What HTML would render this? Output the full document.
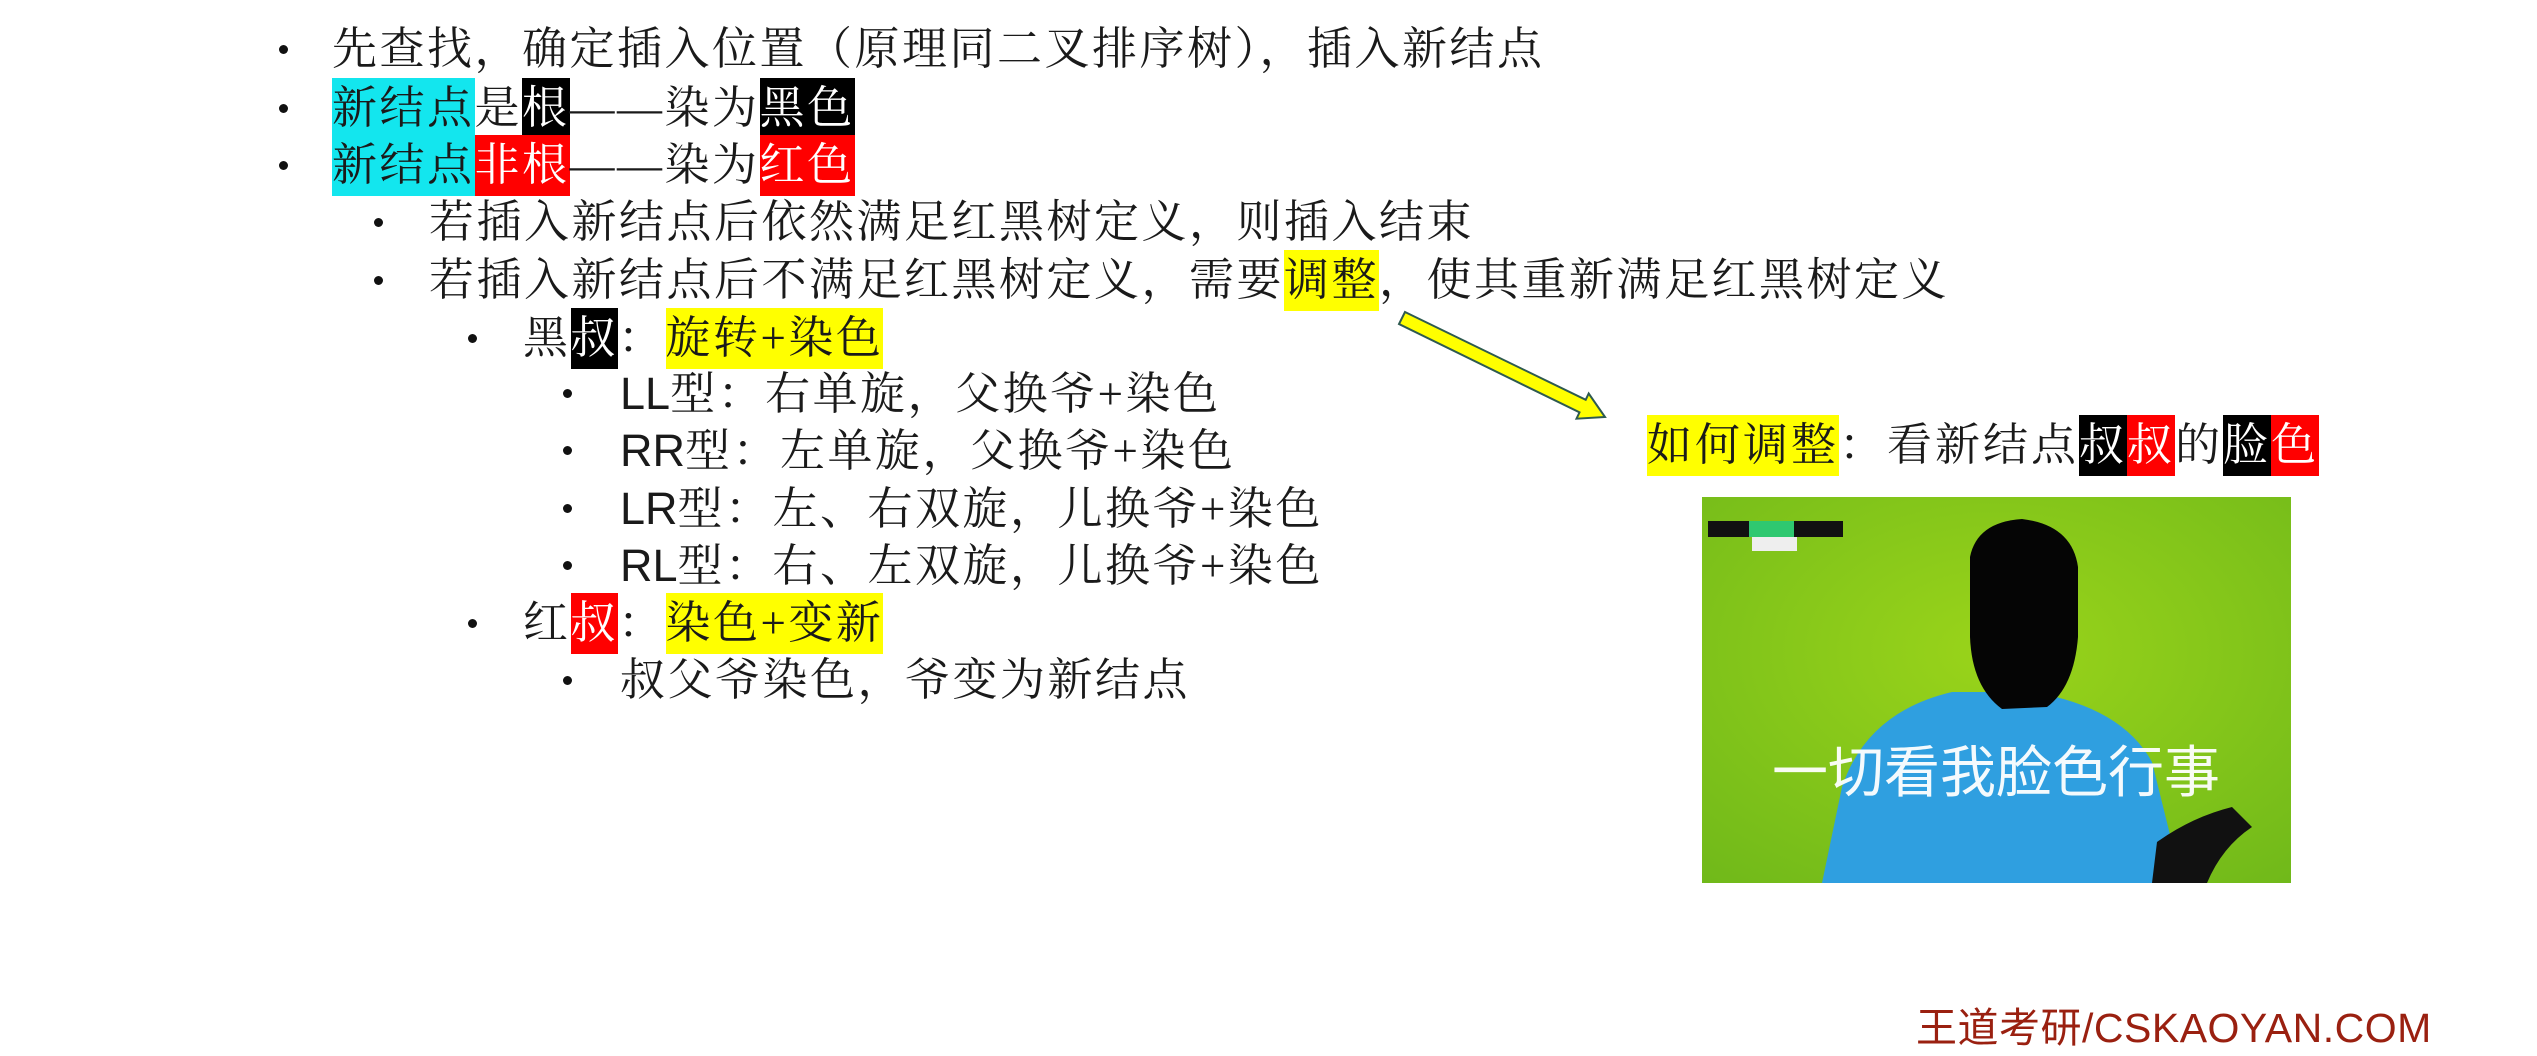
<!DOCTYPE html>
<html><head><meta charset="utf-8"><style>
html,body{margin:0;padding:0;background:#fff;}
body{width:2537px;height:1045px;position:relative;overflow:hidden;font-family:"Liberation Serif","Noto Serif CJK SC","Noto Sans CJK SC",serif;color:#1a1a1a;}
.l{position:absolute;height:57px;line-height:57px;font-size:45px;letter-spacing:2.5px;white-space:nowrap;}
.b{position:absolute;width:9px;height:9px;border-radius:50%;background:#111;}
.c,.k,.r,.y{padding:5px 0 6px;}
.c{background:#13e6ee;}
.k{background:#000;color:#fff;}
.r{background:#f00;color:#fff;}
.y{background:#ffff00;}
.s{font-family:"Liberation Sans",sans-serif;letter-spacing:0;}
</style></head><body>
<div class="b" style="left:279px;top:45px"></div>
<div class="l" style="left:332px;top:21px">先查找，确定插入位置（原理同二叉排序树），插入新结点</div>
<div class="b" style="left:279px;top:104px"></div>
<div class="l" style="left:332px;top:80px"><span class="c">新结点</span>是<span class="k">根</span>——染为<span class="k">黑色</span></div>
<div class="b" style="left:279px;top:161px"></div>
<div class="l" style="left:332px;top:137px"><span class="c">新结点</span><span class="r">非根</span>——染为<span class="r">红色</span></div>
<div class="b" style="left:374px;top:218px"></div>
<div class="l" style="left:429px;top:194px">若插入新结点后依然满足红黑树定义，则插入结束</div>
<div class="b" style="left:374px;top:276px"></div>
<div class="l" style="left:429px;top:252px">若插入新结点后不满足红黑树定义，需要<span class="y">调整</span>，使其重新满足红黑树定义</div>
<div class="b" style="left:468px;top:334px"></div>
<div class="l" style="left:523px;top:310px">黑<span class="k">叔</span>：<span class="y">旋转+染色</span></div>
<div class="b" style="left:563px;top:389px"></div>
<div class="l" style="left:620px;top:365px"><span class="s">LL</span>型：右单旋，父换爷+染色</div>
<div class="b" style="left:563px;top:446px"></div>
<div class="l" style="left:620px;top:422px"><span class="s">RR</span>型：左单旋，父换爷+染色</div>
<div class="b" style="left:563px;top:504px"></div>
<div class="l" style="left:620px;top:480px"><span class="s">LR</span>型：左、右双旋，儿换爷+染色</div>
<div class="b" style="left:563px;top:561px"></div>
<div class="l" style="left:620px;top:537px"><span class="s">RL</span>型：右、左双旋，儿换爷+染色</div>
<div class="b" style="left:468px;top:619px"></div>
<div class="l" style="left:523px;top:595px">红<span class="r">叔</span>：<span class="y">染色+变新</span></div>
<div class="b" style="left:563px;top:676px"></div>
<div class="l" style="left:620px;top:652px">叔父爷染色，爷变为新结点</div>

<svg style="position:absolute;left:0;top:0" width="2537" height="1045">
<polygon points="1405,312 1585.7,399.8 1588.7,393.5 1605,417 1576.5,418.7 1579.5,412.4 1399,324" fill="#ffff00" stroke="#2e5a50" stroke-width="2"/>
</svg>

<div class="l" style="left:1647px;top:417px;letter-spacing:3px"><span class="y">如何调整</span>：看新结点<span class="k">叔</span><span class="r">叔</span>的<span class="k">脸</span><span class="r">色</span></div>

<svg style="position:absolute;left:1702px;top:497px" width="589" height="386" viewBox="0 0 589 386">
<defs><radialGradient id="g" cx="0.5" cy="0.4" r="0.8"><stop offset="0" stop-color="#9ad41a"/><stop offset="1" stop-color="#6fb81a"/></radialGradient></defs>
<rect width="589" height="386" fill="url(#g)"/>
<rect x="6" y="24" width="135" height="16" fill="#111"/>
<rect x="47" y="24" width="45" height="16" fill="#2fc870"/>
<rect x="50" y="40" width="45" height="14" fill="#eee"/>
<path d="M120 386 L140 290 Q165 215 250 195 L330 195 Q420 210 450 265 L480 386 Z" fill="#2f9fe0"/>
<path d="M268 60 Q275 25 320 22 Q370 28 376 70 L376 140 Q372 190 345 210 L300 212 Q270 190 268 140 Z" fill="#050505"/>
<path d="M455 345 Q490 320 530 310 L550 330 Q520 350 505 386 L450 386 Z" fill="#111"/>
<text x="294" y="295" text-anchor="middle" font-family="Liberation Sans,Noto Sans CJK SC,sans-serif" font-size="56" fill="#fff" opacity="0.95">一切看我脸色行事</text>
</svg>

<div style="position:absolute;left:1916px;top:1000px;font-family:'Liberation Sans','Noto Sans CJK SC',sans-serif;font-size:41px;letter-spacing:0.5px;line-height:56px;color:#9a2010;white-space:nowrap">王道考研/CSKAOYAN.COM</div>
</body></html>
